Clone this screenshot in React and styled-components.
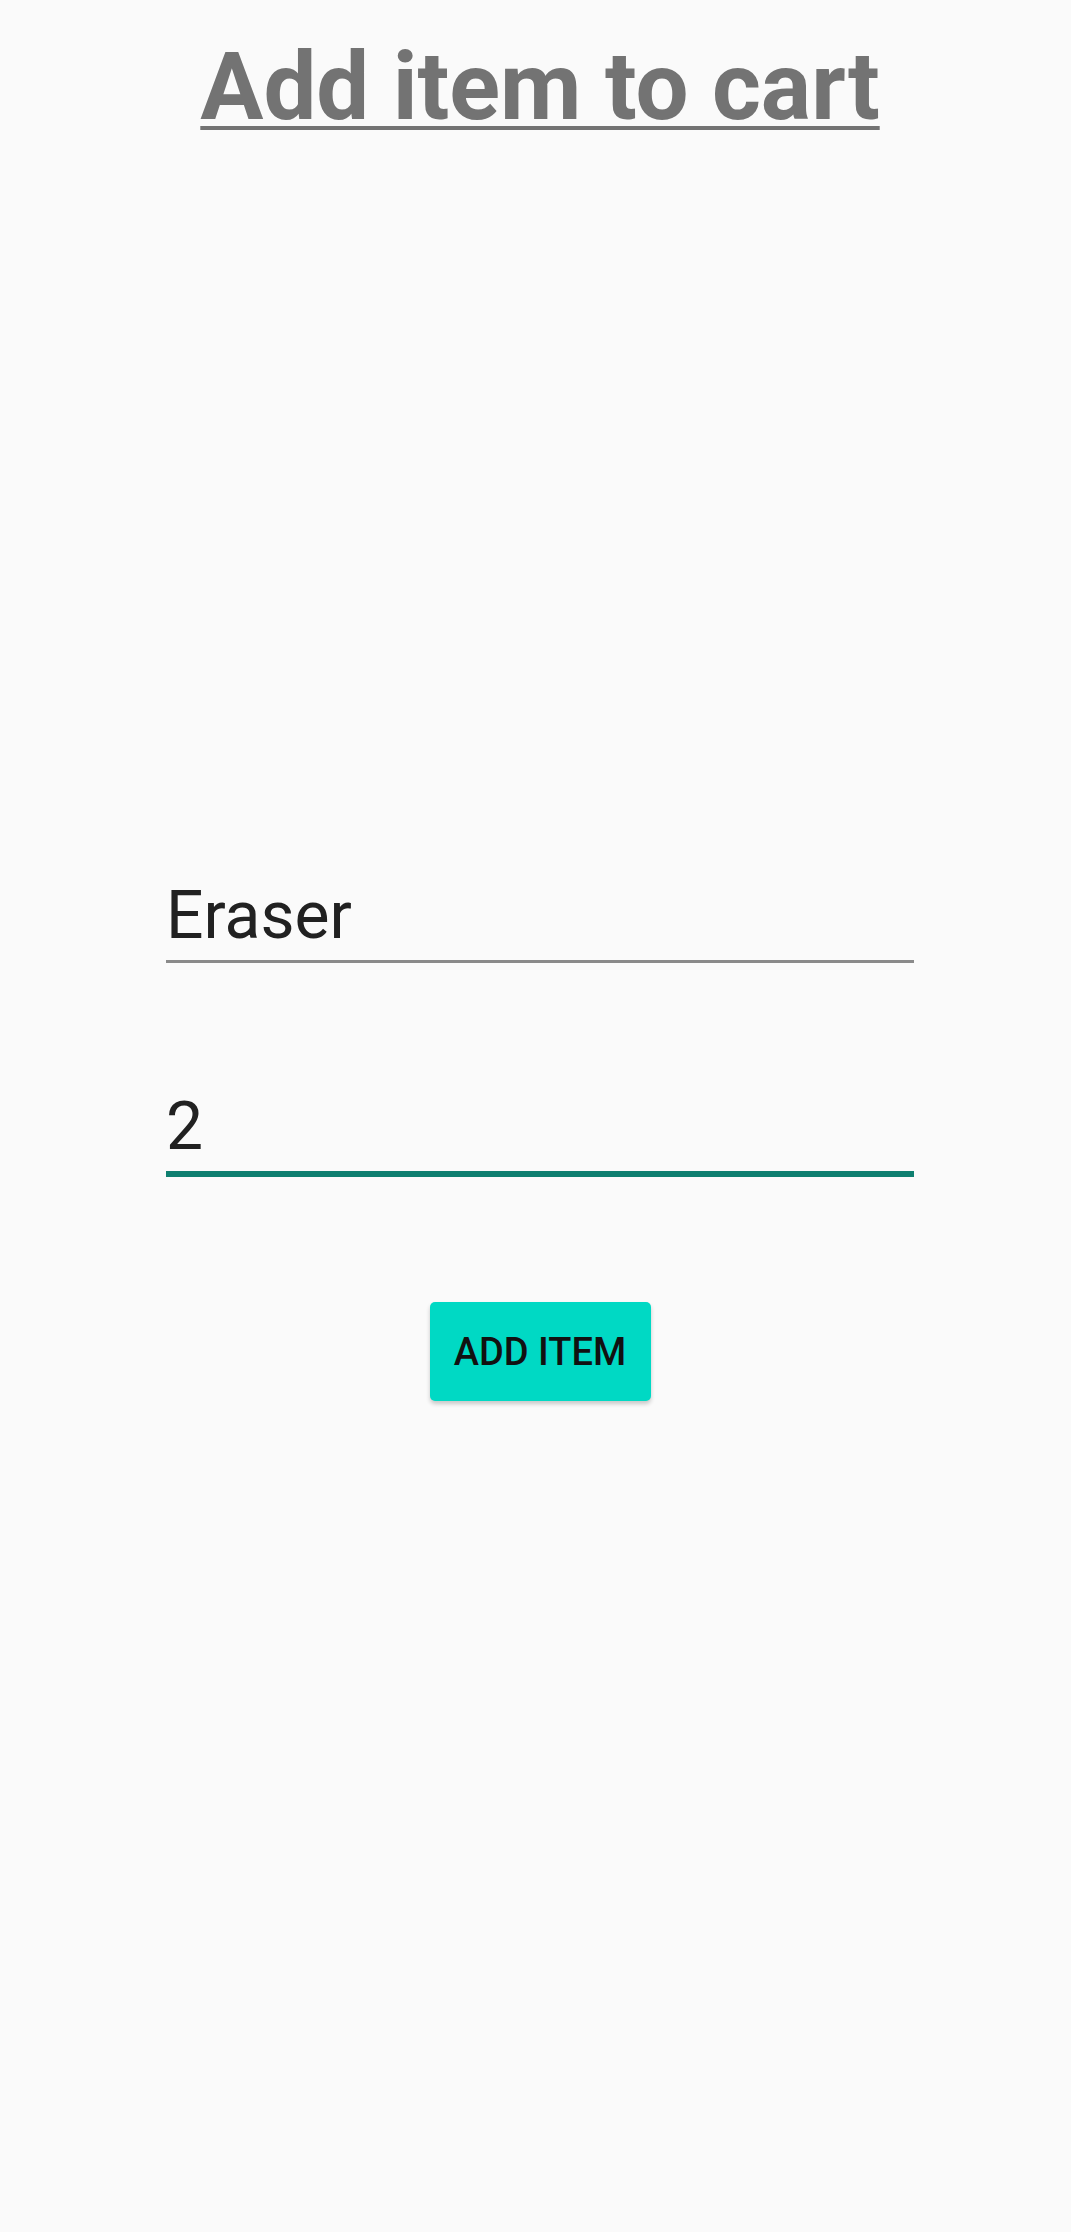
import React, { useState } from 'react';
import styled, { createGlobalStyle } from 'styled-components';

const GlobalStyle = createGlobalStyle`
  html, body {
    margin: 0;
    padding: 0;
    background: #fafafa;
    overflow-x: hidden;
  }
  body {
    font-family: Roboto, "Liberation Sans", sans-serif;
  }
`;

// the app was laid out on a 1080px wide screen
const Screen = styled.div`
  width: 1080px;
  min-height: 2232px;
  display: flex;
  flex-direction: column;
  align-items: center;
  background: #fafafa;
`;

const Title = styled.h1`
  margin: 32px 0 0;
  font-family: Roboto, "Liberation Sans", sans-serif;
  font-size: 94px;
  font-weight: 700;
  line-height: normal;
  color: #737373;
  text-decoration: underline;
  text-decoration-thickness: 4px;
  text-underline-offset: 7px;
`;

const Form = styled.div`
  width: 748px;
  margin-top: 728px;
  display: flex;
  flex-direction: column;
  align-items: center;
  gap: 118px;
`;

const TextField = styled.input`
  width: 100%;
  height: 90px;
  box-sizing: content-box;
  padding: 0;
  margin: 0;
  border: none;
  border-bottom: ${(p) => (p.focused ? '6px solid #0e7f70' : '3px solid #8a8a8a')};
  background: transparent;
  outline: none;
  font-family: Roboto, "Liberation Sans", sans-serif;
  font-size: 66px;
  color: #212121;
`;

const AddButton = styled.button`
  margin-top: 125px;
  width: 221px;
  height: 99px;
  border: none;
  border-radius: 5px;
  background: #00d9c4;
  box-shadow: 0 3px 4px rgba(0, 0, 0, 0.2);
  font-family: Roboto, "Liberation Sans", sans-serif;
  font-size: 38px;
  font-weight: 500;
  color: #111;
  text-transform: uppercase;
  cursor: pointer;
`;

export default function App() {
  const [item, setItem] = useState('Eraser');
  const [qty, setQty] = useState('2');

  return (
    <>
      <GlobalStyle />
      <Screen>
        <Title>Add item to cart</Title>
        <Form>
          <TextField value={item} onChange={(e) => setItem(e.target.value)} />
          <TextField focused value={qty} onChange={(e) => setQty(e.target.value)} />
        </Form>
        <AddButton>Add item</AddButton>
      </Screen>
    </>
  );
}
